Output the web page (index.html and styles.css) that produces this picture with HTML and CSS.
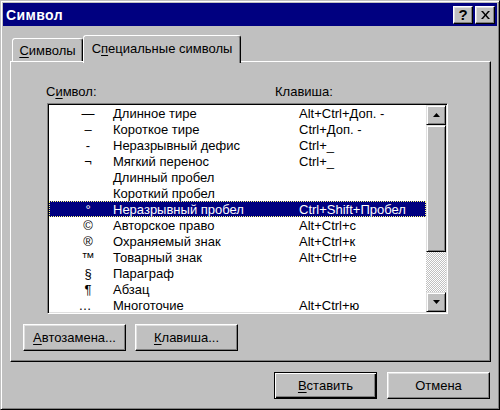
FILE: index.html
```html
<!DOCTYPE html>
<html>
<head>
<meta charset="utf-8">
<link rel="stylesheet" href="styles.css">
</head>
<body>
<div class="window">
  <div class="titlebar">
    <span class="title">Символ</span>
    <div class="tbtns">
      <span class="tbtn">?</span>
      <span class="tbtn"><svg width="9" height="8" viewBox="0 0 9 8"><path d="M0 0h2l2.5 3 2.5-3h2L5.5 4 9 8H7L4.5 5 2 8H0l3.5-4z" fill="#000"/></svg></span>
    </div>
  </div>
  <div class="tabs">
    <div class="tab tab1"><u>С</u>имволы</div>
    <div class="tab tab2">С<u>п</u>ециальные символы</div>
  </div>
  <div class="panel">
    <div class="labels"><span class="lab1">С<u>и</u>мвол:</span><span>Клавиша:</span></div>
    <div class="listbox">
      <div class="items">
        <div class="row"><span class="sym">—</span><span class="name">Длинное тире</span><span>Alt+Ctrl+Доп. -</span></div>
        <div class="row"><span class="sym">–</span><span class="name">Короткое тире</span><span>Ctrl+Доп. -</span></div>
        <div class="row"><span class="sym">-</span><span class="name">Неразрывный дефис</span><span>Ctrl+_</span></div>
        <div class="row"><span class="sym">¬</span><span class="name">Мягкий перенос</span><span>Ctrl+_</span></div>
        <div class="row"><span class="sym"></span><span class="name">Длинный пробел</span><span></span></div>
        <div class="row"><span class="sym"></span><span class="name">Короткий пробел</span><span></span></div>
        <div class="row sel"><span class="sym">°</span><span class="name">Неразрывный пробел</span><span>Ctrl+Shift+Пробел</span></div>
        <div class="row"><span class="sym">©</span><span class="name">Авторское право</span><span>Alt+Ctrl+с</span></div>
        <div class="row"><span class="sym">®</span><span class="name">Охраняемый знак</span><span>Alt+Ctrl+к</span></div>
        <div class="row"><span class="sym">™</span><span class="name">Товарный знак</span><span>Alt+Ctrl+е</span></div>
        <div class="row"><span class="sym">§</span><span class="name">Параграф</span><span></span></div>
        <div class="row"><span class="sym">¶</span><span class="name">Абзац</span><span></span></div>
        <div class="row"><span class="sym ell">…</span><span class="name">Многоточие</span><span>Alt+Ctrl+ю</span></div>
      </div>
      <div class="scrollbar">
        <div class="sbtn"><svg width="7" height="4" viewBox="0 0 7 4"><path d="M3.5 0L7 4H0z" fill="#000"/></svg></div>
        <div class="thumb"></div>
        <div class="track"></div>
        <div class="sbtn"><svg width="7" height="4" viewBox="0 0 7 4"><path d="M0 0h7L3.5 4z" fill="#000"/></svg></div>
      </div>
    </div>
    <div class="pbtns">
      <button class="btn"><u>А</u>втозамена...</button>
      <button class="btn"><u>К</u>лавиша...</button>
    </div>
  </div>
  <div class="footer">
    <button class="btn default"><u>В</u>ставить</button>
    <button class="btn">Отмена</button>
  </div>
</div>
</body>
</html>
```
FILE: styles.css
```css
body {
  margin: 0;
  background: #c0c0c0;
  font-family: "Liberation Sans", Arial, sans-serif;
  font-size: 13px;
  color: #000;
}
u { text-decoration: underline; text-underline-offset: 2px; }
.window {
  width: 500px;
  height: 410px;
  box-sizing: border-box;
  background: #c0c0c0;
  border: 1px solid;
  border-color: #c0c0c0 #000 #000 #c0c0c0;
  box-shadow: inset 1px 1px #fff, inset -1px -1px #808080;
  padding: 2px;
}
.titlebar {
  height: 23px;
  background: #000080;
  color: #fff;
  display: flex;
  align-items: center;
  justify-content: space-between;
  padding: 0 2px 0 3px;
}
.title { font-weight: bold; font-size: 14px; letter-spacing: 0.4px; }
.tbtns { display: flex; gap: 2px; }
.tbtn {
  width: 18px;
  height: 16px;
  background: #c0c0c0;
  border: 1px solid;
  border-color: #fff #000 #000 #fff;
  box-shadow: inset -1px -1px #808080, inset 1px 1px #dfdfdf;
  display: flex;
  align-items: center;
  justify-content: center;
  color: #000;
  font-weight: bold;
  font-size: 15px;
}
.tabs {
  display: flex;
  align-items: flex-end;
  height: 28px;
  margin: 9px 0 -2px 9px;
  position: relative;
  z-index: 1;
}
.tab {
  box-sizing: border-box;
  background: #c0c0c0;
  border: 1px solid;
  border-bottom: none;
  border-color: #fff #000 transparent #fff;
  box-shadow: inset -1px 0 #808080;
  border-radius: 3px 3px 0 0;
  display: flex;
  align-items: center;
  justify-content: center;
}
.tab1 { width: 71px; height: 23px; margin-bottom: 2px; padding-top: 1px; }
.tab2 { width: 158px; height: 28px; padding-bottom: 2px; }
.panel {
  margin-left: 7px;
  width: 481px;
  height: 301px;
  box-sizing: border-box;
  border: 1px solid;
  border-color: #fff #000 #000 #fff;
  box-shadow: inset -1px -1px #808080;
}
.labels {
  display: flex;
  height: 16px;
  line-height: 16px;
  margin: 22px 0 0 35px;
}
.lab1 { width: 229px; }
.listbox {
  margin: 3px 0 0 36px;
  width: 401px;
  height: 211px;
  box-sizing: border-box;
  border: 1px solid;
  border-color: #808080 #fff #fff #808080;
  box-shadow: inset 1px 1px #000, inset -1px -1px #dfdfdf;
  padding: 1px;
  display: flex;
  background: #fff;
}
.items { width: 377px; overflow: hidden; }
.row { display: flex; height: 16px; line-height: 17px; white-space: nowrap; }
.sym { width: 50px; margin-left: 14px; text-align: center; }
.sym.ell { width: 44px; margin-right: 6px; }
.name { width: 186px; }
.row.sel {
  background: #000080;
  color: #fff;
  outline: 1px dotted #ffff80;
  outline-offset: -1px;
}
.scrollbar { width: 20px; display: flex; flex-direction: column; }
.sbtn, .thumb {
  box-sizing: border-box;
  background: #c0c0c0;
  border: 1px solid;
  border-color: #dfdfdf #000 #000 #dfdfdf;
  box-shadow: inset 1px 1px #fff, inset -1px -1px #808080;
}
.sbtn { height: 20px; display: flex; align-items: center; justify-content: center; }
.thumb { height: 127px; }
.track {
  flex: 1;
  background: repeating-conic-gradient(#c0c0c0 0 25%, #fff 0 50%) 0 0 / 2px 2px;
}
.pbtns { display: flex; gap: 9px; margin: 10px 0 0 12px; }
.btn {
  width: 103px;
  height: 27px;
  box-sizing: border-box;
  padding: 0;
  margin: 0;
  font: inherit;
  color: #000;
  background: #c0c0c0;
  border: 1px solid;
  border-color: #fff #000 #000 #fff;
  box-shadow: inset -1px -1px #808080, inset 1px 1px #dfdfdf;
}
.btn.default {
  border-color: #000;
  box-shadow: inset 1px 1px #fff, inset -1px -1px #000, inset -2px -2px #808080;
}
.footer { display: flex; justify-content: flex-end; gap: 10px; margin: 10px 7px 0 0; }
```
